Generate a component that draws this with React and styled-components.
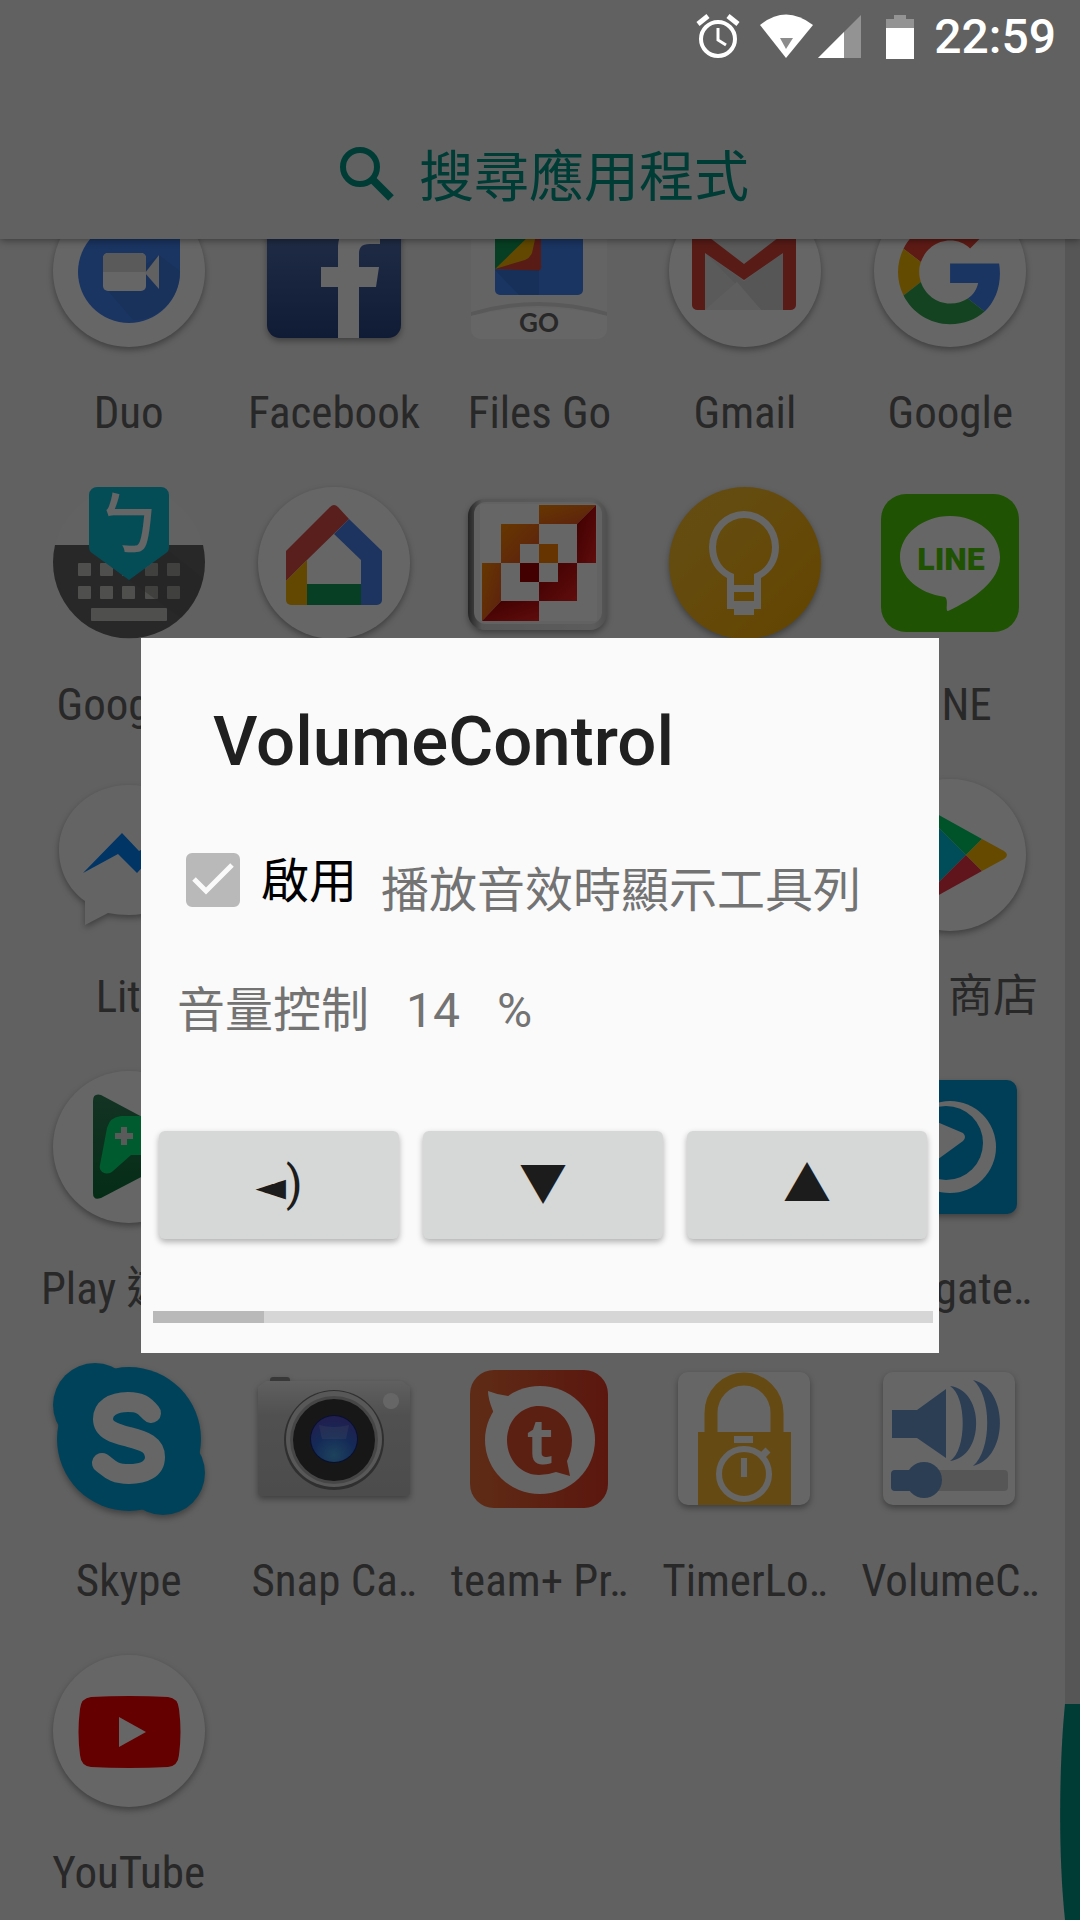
import React, { useState } from "react";
import styled, { createGlobalStyle } from "styled-components";

const GlobalStyle = createGlobalStyle`
  *, *::before, *::after { box-sizing: border-box; }
  body {
    margin: 0;
    background: #616161;
    font-family: Roboto, "Noto Sans CJK TC", sans-serif;
  }
  button, input { font: inherit; }
`;

const Screen = styled.div`
  position: relative;
  display: flex;
  flex-direction: column;
  height: 100vh;
  overflow: hidden;
  background: #f2f2f2;
`;

const StatusBar = styled.div`
  position: relative;
  z-index: 3;
  flex: none;
  display: flex;
  align-items: center;
  justify-content: flex-end;
  height: 72px;
  padding-right: 24px;
  color: #fff;
`;

const StatusIcons = styled.svg`
  display: block;
  width: 220px;
  height: 48px;
`;

const Clock = styled.time`
  margin-left: 18px;
  padding-top: 2px;
  font-size: 48px;
  font-weight: 500;
  line-height: 72px;
`;

const SearchBar = styled.label`
  position: relative;
  z-index: 1;
  flex: none;
  display: flex;
  align-items: center;
  justify-content: center;
  gap: 24px;
  height: 167px;
  padding: 36px 0 0 10px;
  background: #f2f2f2;
  box-shadow: 0 1px 8px rgba(0, 0, 0, 0.45);
  clip-path: inset(0 0 -12px 0);
`;

const SearchIcon = styled.svg`
  width: 56px;
  height: 56px;
`;

const SearchInput = styled.input`
  width: 332px;
  padding: 6px 0 0;
  border: 0;
  outline: 0;
  background: none;
  color: #009688;
  font-size: 55px;
  line-height: 80px;
  &::placeholder { color: #009688; opacity: 1; }
`;

const Drawer = styled.main`
  flex: 1;
  display: flex;
  min-height: 0;
`;

const AppGrid = styled.ul`
  flex: 1;
  display: grid;
  grid-template-columns: repeat(5, minmax(0, 1fr));
  grid-auto-rows: 292px;
  margin: -48px 0 0;
  padding: 0 12px 0 26px;
  list-style: none;
`;

const AppButton = styled.button`
  display: flex;
  flex-direction: column;
  align-items: center;
  gap: 34px;
  width: 100%;
  padding: 0;
  border: 0;
  background: none;
`;

const AppIcon = styled.svg`
  display: block;
  width: 160px;
  height: 160px;
  overflow: visible;
  filter: ${(p) => (p.$flat ? "none" : "drop-shadow(0 3px 3px rgba(0, 0, 0, 0.35))")};
`;

const AppLabel = styled.span`
  color: #646464;
  font-family: "Roboto Condensed", Roboto, "Noto Sans CJK TC", sans-serif;
  font-size: 45px;
  line-height: 56px;
  white-space: nowrap;
`;

const ScrollTrack = styled.div`
  flex: none;
  display: flex;
  align-items: flex-end;
  justify-content: flex-end;
  width: 15px;
  background: #d6d6d6;
`;

const ScrollThumb = styled.svg`
  flex: none;
  width: 20px;
  height: 216px;
`;

const Scrim = styled.div`
  position: absolute;
  inset: 0;
  z-index: 2;
  display: flex;
  align-items: center;
  padding: 71px 141px 0;
  background: rgba(0, 0, 0, 0.6);
`;

const Dialog = styled.section`
  flex: 1;
  padding: 64px 6px 30px 12px;
  background: #fafafa;
  color: #737373;
`;

const Title = styled.h1`
  margin: 0;
  padding-left: 60px;
  color: #202020;
  font-size: 69px;
  font-weight: 500;
  line-height: 80px;
`;

const OptionRow = styled.div`
  display: flex;
  gap: 24px;
  margin-top: 71px;
  padding-left: 33px;
  font-size: 48px;
  line-height: 58px;
`;

const CheckLabel = styled.label`
  display: flex;
  gap: 21px;
  color: #000;
`;

const CheckBox = styled.span`
  display: grid;
  width: 54px;
  height: 54px;
  & > * { grid-area: 1 / 1; }
`;

const CheckInput = styled.input`
  appearance: none;
  width: 54px;
  height: 54px;
  margin: 0;
  border: 5px solid #b9b9b9;
  border-radius: 6px;
  &:checked { background: #b9b9b9; }
  &:not(:checked) + svg { visibility: hidden; }
`;

const CheckMark = styled.svg`
  width: 54px;
  height: 54px;
  pointer-events: none;
`;

const Hint = styled.span`
  padding-top: 9px;
`;

const VolumeRow = styled.div`
  display: flex;
  gap: 37px;
  margin-top: 62px;
  padding-left: 24px;
  font-size: 48px;
  line-height: 58px;
`;

const ButtonRow = styled.div`
  display: grid;
  grid-template-columns: repeat(3, 1fr);
  gap: 24px;
  margin-top: 91px;
  padding: 0 6px;
`;

const VolumeButton = styled.button`
  height: 108px;
  padding: 0;
  border: 0;
  border-radius: 6px;
  background: #d6d8d7;
  box-shadow: 0 3px 6px rgba(0, 0, 0, 0.3);
  color: #1c1c1c;
  font-family: Roboto, "Noto Sans CJK TC", "DejaVu Sans", sans-serif;
  font-size: 48px;
  line-height: 58px;
`;

const Pointer = styled.span`
  font-family: "DejaVu Sans", sans-serif;
  font-size: 40px;
`;

const Level = styled.progress`
  appearance: none;
  display: block;
  width: 100%;
  height: 12px;
  margin-top: 72px;
  border: 0;
  background: #d6d6d6;
  &::-webkit-progress-bar { background: #d6d6d6; }
  &::-webkit-progress-value { background: #b9b9b9; }
`;

const Disc = ({ fill = "#fff" }) => <circle cx="80" cy="80" r="76" fill={fill} />;

const art = {
  duo: (
    <>
      <Disc />
      <path d="M80 30H131V81A51 51 0 1 1 80 30Z" fill="#4285f4" />
      <path d="M59 100L84 129C108 130 131 108 131 82V80L110 64Z" fill="#3b78dc" opacity=".6" />
      <rect x="54" y="62" width="43" height="38" rx="5" fill="#fff" />
      <path d="M54 81V67A5 5 0 0 1 59 62H92A5 5 0 0 1 97 67V81Z" fill="#e2e2e2" />
      <path d="M96 82L110 64V98Z" fill="#f2f2f2" />
    </>
  ),
  facebook: (
    <>
      <defs>
        <linearGradient id="fb" x1="0" y1="0" x2="0" y2="1">
          <stop offset="0" stopColor="#5b7abc" />
          <stop offset="1" stopColor="#294584" />
        </linearGradient>
      </defs>
      <rect x="13" y="13" width="134" height="134" rx="13" fill="url(#fb)" />
      <path d="M84 147V96H67V76H84V58C84 38 96 30 112 30H126V53H116C107 53 105 57 105 63V76H125L122 96H105V147Z" fill="#fff" />
    </>
  ),
  files: (
    <>
      <path d="M12 12H148V138A10 10 0 0 1 138 148H22A10 10 0 0 1 12 138Z" fill="#fafafa" />
      <path d="M36 30H124V99A5 5 0 0 1 119 104H41A5 5 0 0 1 36 99Z" fill="#4285f4" />
      <path d="M36 30V78L80 80Q83 78 82 74V30Z" fill="#db4437" />
      <path d="M36 78L70 30H80L73 62Q71 67 66 69Z" fill="#f4b400" />
      <path d="M36 30V78L75 40V30Z" fill="#109d58" />
      <path d="M36 79H80V104H60Z" fill="#346fd1" opacity=".6" />
      <path d="M12 125Q80 105 148 125V121Q80 101 12 121Z" fill="#dedede" />
      <path d="M12 125Q80 109 148 125V138A10 10 0 0 1 138 148H22A10 10 0 0 1 12 138Z" fill="#fff" />
      <text x="80" y="141" textAnchor="middle" fontFamily="Lato, sans-serif" fontSize="26" fontWeight="700" fill="#646464">GO</text>
    </>
  ),
  gmail: (
    <>
      <Disc />
      <path d="M30 40H128V119H30Z" fill="#e2e2e2" />
      <path d="M40 119L79 88L118 119Z" fill="#f0f0f0" />
      <path d="M40 62L96 119H118V62L79 90Z" fill="#d8d8d8" />
      <path d="M40 119L72 91L96 119Z" fill="#ececec" />
      <path d="M27 40V114A5 5 0 0 0 32 119H40V62L79 89L118 62V119H126A5 5 0 0 0 131 114V40H122L79 73L36 40Z" fill="#db4437" />
    </>
  ),
  google: (
    <>
      <Disc />
      <g transform="translate(28 29) scale(2.17)">
        <path fill="#ea4335" d="M24 9.5c3.54 0 6.71 1.22 9.21 3.6l6.85-6.85C35.9 2.38 30.47 0 24 0 14.62 0 6.51 5.38 2.56 13.22l7.98 6.19C12.43 13.72 17.74 9.5 24 9.5z" />
        <path fill="#4285f4" d="M46.98 24.55c0-1.57-.15-3.09-.38-4.55H24v9.02h12.94c-.58 2.96-2.26 5.48-4.78 7.18l7.73 6c4.51-4.18 7.09-10.36 7.09-17.65z" />
        <path fill="#fbbc05" d="M10.53 28.59c-.48-1.45-.76-2.99-.76-4.59s.27-3.14.76-4.59l-7.98-6.19C.92 16.46 0 20.12 0 24c0 3.88.92 7.54 2.56 10.78l7.97-6.19z" />
        <path fill="#34a853" d="M24 48c6.48 0 11.93-2.13 15.89-5.81l-7.73-6c-2.15 1.45-4.92 2.3-8.16 2.3-6.26 0-11.57-4.22-13.47-9.91l-7.98 6.19C6.51 42.62 14.62 48 24 48z" />
      </g>
    </>
  ),
  zhuyin: (
    <>
      <Disc fill="#f5f5f5" />
      <path d="M6 62H154A76 76 0 1 1 6 62Z" fill="#646464" />
      {[29, 51, 73, 96, 118].map((x) => (
        <g key={x} fill="#c6c6c0">
          <rect x={x} y="80" width="13" height="13" rx="1" />
          <rect x={x} y="103" width="13" height="13" rx="1" />
        </g>
      ))}
      <rect x="42" y="125" width="76" height="13" rx="1" fill="#c6c6c0" />
      <path d="M80 97L120 68L154 95A76 76 0 0 1 132 135Z" fill="#5a5a5a" opacity=".35" />
      <path d="M49 4H112A8 8 0 0 1 120 12V64Q120 68 117 70L80 97L43 70Q40 68 40 64V12A8 8 0 0 1 49 4Z" fill="#0cbfd8" />
      <text x="80" y="66" textAnchor="middle" fontFamily="'Noto Sans CJK TC', sans-serif" fontSize="68" fontWeight="500" fill="#fff">ㄅ</text>
    </>
  ),
  home: (
    <>
      <Disc />
      <path d="M76 24Q80 20 84 24L95 36L53 77L32 98V68Z" fill="#db4f47" />
      <path d="M32 98L53 77V122H37A5 5 0 0 1 32 117Z" fill="#f4b400" />
      <path d="M53 101H107V122H53Z" fill="#109d58" />
      <path d="M95 36L128 68V117A5 5 0 0 1 123 122H107V77L80 51Z" fill="#4a83f0" />
    </>
  ),
  tiles: (
    <>
      <defs>
        <linearGradient id="tileO" x1="0" y1="0" x2="1" y2="1">
          <stop offset="0" stopColor="#ff8a00" />
          <stop offset="1" stopColor="#e8502a" />
        </linearGradient>
        <linearGradient id="tileR" x1="0" y1="0" x2="1" y2="1">
          <stop offset="0" stopColor="#9c0000" />
          <stop offset="1" stopColor="#f02020" />
        </linearGradient>
        <linearGradient id="bevel" x1="0" y1="0" x2="1" y2="0">
          <stop offset="0" stopColor="#5c5c5c" />
          <stop offset=".1" stopColor="#d8d8d8" />
          <stop offset=".9" stopColor="#e6e6e6" />
          <stop offset="1" stopColor="#c8c8c8" />
        </linearGradient>
      </defs>
      <rect x="9" y="16" width="139" height="131" rx="17" fill="url(#bevel)" />
      <rect x="15" y="19" width="128" height="122" rx="12" fill="#f4f4f4" />
      <rect x="21" y="21" width="117" height="117" rx="2" fill="#fff" />
      <path d="M80 22H137L118 41H80Z" fill="url(#tileO)" />
      <path d="M42 41H80V61H61V80H42Z" fill="url(#tileO)" />
      <path d="M80 61H99V80H80Z" fill="#ff8200" />
      <path d="M23 80H42V118L23 138Z" fill="url(#tileO)" />
      <path d="M137 22V80H118V41Z" fill="url(#tileR)" />
      <path d="M61 80H80V99H61Z" fill="#a80000" />
      <path d="M99 80H118V118H80V99H99Z" fill="url(#tileR)" />
      <path d="M42 118H80V138H23Z" fill="url(#tileR)" />
    </>
  ),
  keep: (
    <>
      <defs>
        <linearGradient id="keep" x1="0" y1="0" x2="1" y2="1">
          <stop offset="0" stopColor="#fcc235" />
          <stop offset="1" stopColor="#f8ac00" />
        </linearGradient>
      </defs>
      <Disc fill="url(#keep)" />
      <path d="M62 91V126H69V132H89V126H96V95C107 89 114 78 114 64A35 36 0 0 0 44 64C44 78 51 89 62 95Z M69 91C58 87 51 77 51 64A28 29 0 0 1 107 64C107 77 100 87 89 91V102H69Z M69 109H89V118H69Z" fill="#fff" fillRule="evenodd" />
    </>
  ),
  line: (
    <>
      <rect x="11" y="11" width="138" height="138" rx="25" fill="#4ecd06" />
      <path d="M80 33C107 33 130 51 130 74C130 98 104 116 78 128C75 128 79 117 75 114C48 110 30 94 30 74C30 51 53 33 80 33Z" fill="#fff" />
      <text x="81" y="87" textAnchor="middle" fontFamily="Roboto, sans-serif" fontSize="32" fontWeight="900" fill="#4ecd06">LINE</text>
    </>
  ),
  lite: (
    <>
      <path d="M80 10C119 10 150 39 150 75S119 140 80 140Q69 140 59 138L36 150V126C19 114 10 95 10 75C10 39 41 10 80 10Z" fill="#fafafa" />
      <path d="M34 98L73 58L90 76L126 57L88 98L69 79Z" fill="#0084ff" />
    </>
  ),
  store: (
    <>
      <Disc />
      <path d="M40 24L96 80L40 136Z" fill="#00c1e0" />
      <path d="M40 24L112 64L96 80Z" fill="#00d068" />
      <path d="M40 136L112 96L96 80Z" fill="#f03648" />
      <path d="M112 64L134 76Q140 80 134 84L112 96L96 80Z" fill="#fcb900" />
    </>
  ),
  games: (
    <>
      <Disc />
      <defs>
        <linearGradient id="games" x1="0" y1="0" x2="0" y2="1">
          <stop offset="0" stopColor="#32805a" />
          <stop offset="1" stopColor="#0b7038" />
        </linearGradient>
      </defs>
      <path d="M44 34Q44 26 52 28L142 76Q147 80 142 84L52 131Q44 134 44 126Z" fill="url(#games)" />
      <path d="M72 49H120L132 98Q128 112 116 104L98 88H82L64 104C57 110 49 104 51 98L58 61Q61 50 72 49Z" fill="#00e676" />
      <path d="M72 60H78V66H84V72H78V78H72V72H66V66H72Z" fill="#e0e0e0" />
    </>
  ),
  seagate: (
    <>
      <rect x="13" y="13" width="134" height="134" rx="10" fill="#0099d6" />
      <circle cx="80" cy="80" r="46" fill="#fff" />
      <circle cx="76" cy="76" r="37" fill="#0099d6" />
      <path d="M60 52L93 66Q97 70 93 74L60 98Z" fill="#fff" />
    </>
  ),
  skype: (
    <>
      <g fill="#00a6e0">
        <circle cx="80" cy="80" r="72" />
        <circle cx="46" cy="46" r="42" />
        <circle cx="114" cy="114" r="42" />
      </g>
      <path d="M102 54C95 46 91 43 79 43C63 43 54 50 54 60C54 72 68 75 80 78C96 82 106 86 106 98C106 110 95 115 80 115C62 115 60 108 53 104" fill="none" stroke="#fff" strokeWidth="20" strokeLinecap="round" />
    </>
  ),
  camera: (
    <>
      <defs>
        <linearGradient id="cam" x1="0" y1="0" x2="0" y2="1">
          <stop offset="0" stopColor="#f0f0f0" />
          <stop offset=".3" stopColor="#c8c8c8" />
          <stop offset="1" stopColor="#bebebe" />
        </linearGradient>
        <radialGradient id="lens" cx=".5" cy=".85" r=".9">
          <stop offset="0" stopColor="#4aa8e8" />
          <stop offset=".5" stopColor="#3468d8" />
          <stop offset="1" stopColor="#5a48c0" />
        </radialGradient>
      </defs>
      <rect x="16" y="18" width="20" height="8" rx="3" fill="#8c8c8c" />
      <path d="M12 22H148L156 28V133A4 4 0 0 1 152 137H8A4 4 0 0 1 4 133V28Z" fill="url(#cam)" />
      <circle cx="80" cy="81" r="50" fill="#777" />
      <circle cx="80" cy="80" r="48" fill="#dcdcdc" />
      <circle cx="80" cy="81" r="44" fill="#b0b0b0" />
      <circle cx="80" cy="81" r="41" fill="#3a3a3a" />
      <circle cx="80" cy="80" r="24" fill="#142878" />
      <circle cx="80" cy="80" r="23" fill="url(#lens)" />
      <path d="M65 66Q80 70 95 66L92 80H68Z" fill="#a8b4e8" opacity=".3" />
      <circle cx="137" cy="42" r="8" fill="#fff" />
    </>
  ),
  team: (
    <>
      <defs>
        <linearGradient id="team" x1="0" y1="0" x2="1" y2="0">
          <stop offset="0" stopColor="#ec6e38" />
          <stop offset="1" stopColor="#e43a24" />
        </linearGradient>
      </defs>
      <rect x="11" y="11" width="138" height="138" rx="24" fill="url(#team)" />
      <ellipse cx="81" cy="81" rx="55" ry="54" fill="#fff" />
      <path d="M29 32Q39 36 49 37L60 40L34 60V52Q29 40 29 32Z" fill="#fff" />
      <path d="M80 47C99 47 113 62 113 81Q113 93 108 102L111 117L97 113Q89 116 80 116C62 116 48 101 48 81C48 62 62 47 80 47Z" fill="#e65030" />
      <text x="81" y="105" textAnchor="middle" fontFamily="'Open Sans', sans-serif" fontSize="62" fontWeight="700" fill="#fff">t</text>
    </>
  ),
  timer: (
    <>
      <rect x="13" y="13" width="132" height="133" rx="10" fill="#fff" />
      <path d="M46 75V54A33 34 0 0 1 112 54V75" fill="none" stroke="#fcba34" strokeWidth="13" />
      <rect x="33" y="73" width="93" height="73" fill="#fcba34" />
      <rect x="69" y="77" width="19" height="7" fill="#fff" />
      <circle cx="79" cy="115" r="25" fill="none" stroke="#fff" strokeWidth="6" />
      <path d="M97 97L103 91" stroke="#fff" strokeWidth="7" />
      <rect x="76" y="99" width="6" height="19" fill="#fff" />
    </>
  ),
  volume: (
    <>
      <rect x="13" y="13" width="132" height="133" rx="10" fill="#fff" />
      <g fill="#6e9bd2">
        <path d="M22 51H47L76 30V99L47 79H22Z" />
        <path d="M80 27C115 31 115 98 80 102C97 92 97 37 80 27Z" />
        <path d="M103 21C139 29 139 99 103 107C122 92 122 36 103 21Z" />
      </g>
      <rect x="22" y="111" width="116" height="21" rx="4" fill="#d8d8d8" />
      <rect x="21" y="111" width="36" height="21" rx="4" fill="#6e9bd2" />
      <circle cx="54" cy="121" r="18" fill="#6e9bd2" />
    </>
  ),
  youtube: (
    <>
      <Disc />
      <path d="M42 46Q80 44 119 46Q129 47 130 58Q133 81 130 104Q129 115 119 116Q80 118 42 116Q32 115 31 104Q28 81 31 58Q32 47 42 46Z" fill="#fc0000" />
      <path d="M70 66L97 81L70 96Z" fill="#fff" />
    </>
  ),
};

const apps = [
  { icon: "duo", label: "Duo" },
  { icon: "facebook", label: "Facebook" },
  { icon: "files", label: "Files Go", flat: true },
  { icon: "gmail", label: "Gmail" },
  { icon: "google", label: "Google" },
  { icon: "zhuyin", label: "Google‥", flat: true },
  { icon: "home" },
  { icon: "tiles" },
  { icon: "keep" },
  { icon: "line", label: "LINE", flat: true },
  { icon: "lite", label: "Lite" },
  {},
  {},
  {},
  { icon: "store", label: "Play 商店" },
  { icon: "games", label: "Play 遊戲" },
  {},
  {},
  {},
  { icon: "seagate", label: "Seagate‥" },
  { icon: "skype", label: "Skype" },
  { icon: "camera", label: "Snap Ca‥" },
  { icon: "team", label: "team+ Pr‥", flat: true },
  { icon: "timer", label: "TimerLo‥" },
  { icon: "volume", label: "VolumeC‥" },
  { icon: "youtube", label: "YouTube" },
];

const STEPS = 7;

export default function App() {
  const [enabled, setEnabled] = useState(true);
  const [level, setLevel] = useState(1);

  return (
    <>
      <GlobalStyle />
      <Screen>
        <StatusBar>
          <StatusIcons viewBox="0 0 220 48" aria-hidden="true">
            <g fill="none" stroke="#fff">
              <circle cx="22" cy="27" r="17" strokeWidth="4" />
              <path d="M22 16V28L30 33" strokeWidth="3" />
              <path d="M2 12L12 4M42 12L32 4" strokeWidth="5" />
            </g>
            <path d="M64 13Q90 -8 117 13L90 46Z" fill="#fff" />
            <path d="M84 26H97L90 37Z" fill="#8c8c8c" />
            <path d="M165 3V46H122Z" fill="#fff" opacity=".32" />
            <path d="M148 20V46H122Z" fill="#fff" />
            <path d="M190 7H198V3H210V7H218V17H190Z" fill="#fff" opacity=".32" />
            <rect x="190" y="16" width="28" height="31" fill="#fff" />
          </StatusIcons>
          <Clock>22:59</Clock>
        </StatusBar>

        <SearchBar>
          <SearchIcon viewBox="0 0 56 56" fill="none" stroke="#009688" aria-hidden="true">
            <circle cx="21" cy="21" r="17" strokeWidth="6" />
            <path d="M33 33L52 52" strokeWidth="8" />
          </SearchIcon>
          <SearchInput type="text" placeholder="搜尋應用程式" aria-label="搜尋應用程式" />
        </SearchBar>

        <Drawer>
          <AppGrid>
            {apps.map((app, i) => (
              <li key={i}>
                {app.icon && (
                  <AppButton type="button">
                    <AppIcon viewBox="0 0 160 160" $flat={app.flat} aria-hidden="true">
                      {art[app.icon]}
                    </AppIcon>
                    {app.label && <AppLabel>{app.label}</AppLabel>}
                  </AppButton>
                )}
              </li>
            ))}
          </AppGrid>
          <ScrollTrack>
            <ScrollThumb viewBox="0 0 20 216" aria-hidden="true">
              <path d="M5 0H20V216H5C-2 150 -1 60 5 0Z" fill="#009688" />
            </ScrollThumb>
          </ScrollTrack>
        </Drawer>

        <Scrim>
          <Dialog role="dialog" aria-labelledby="dialog-title">
            <Title id="dialog-title">VolumeControl</Title>
            <OptionRow>
              <CheckLabel>
                <CheckBox>
                  <CheckInput
                    type="checkbox"
                    checked={enabled}
                    onChange={(e) => setEnabled(e.target.checked)}
                  />
                  <CheckMark viewBox="0 0 54 54" fill="none" stroke="#fafafa" strokeWidth="5" aria-hidden="true">
                    <path d="M8 26L20 38L46 12" />
                  </CheckMark>
                </CheckBox>
                啟用
              </CheckLabel>
              <Hint>播放音效時顯示工具列</Hint>
            </OptionRow>
            <VolumeRow>
              <span>音量控制</span>
              <span>{Math.floor((level * 100) / STEPS)}</span>
              <span>%</span>
            </VolumeRow>
            <ButtonRow>
              <VolumeButton type="button" onClick={() => setLevel(0)}>
                <Pointer>◄</Pointer>)
              </VolumeButton>
              <VolumeButton type="button" onClick={() => setLevel(Math.max(0, level - 1))}>▼</VolumeButton>
              <VolumeButton type="button" onClick={() => setLevel(Math.min(STEPS, level + 1))}>▲</VolumeButton>
            </ButtonRow>
            <Level max={STEPS} value={level} aria-label="音量控制" />
          </Dialog>
        </Scrim>
      </Screen>
    </>
  );
}
